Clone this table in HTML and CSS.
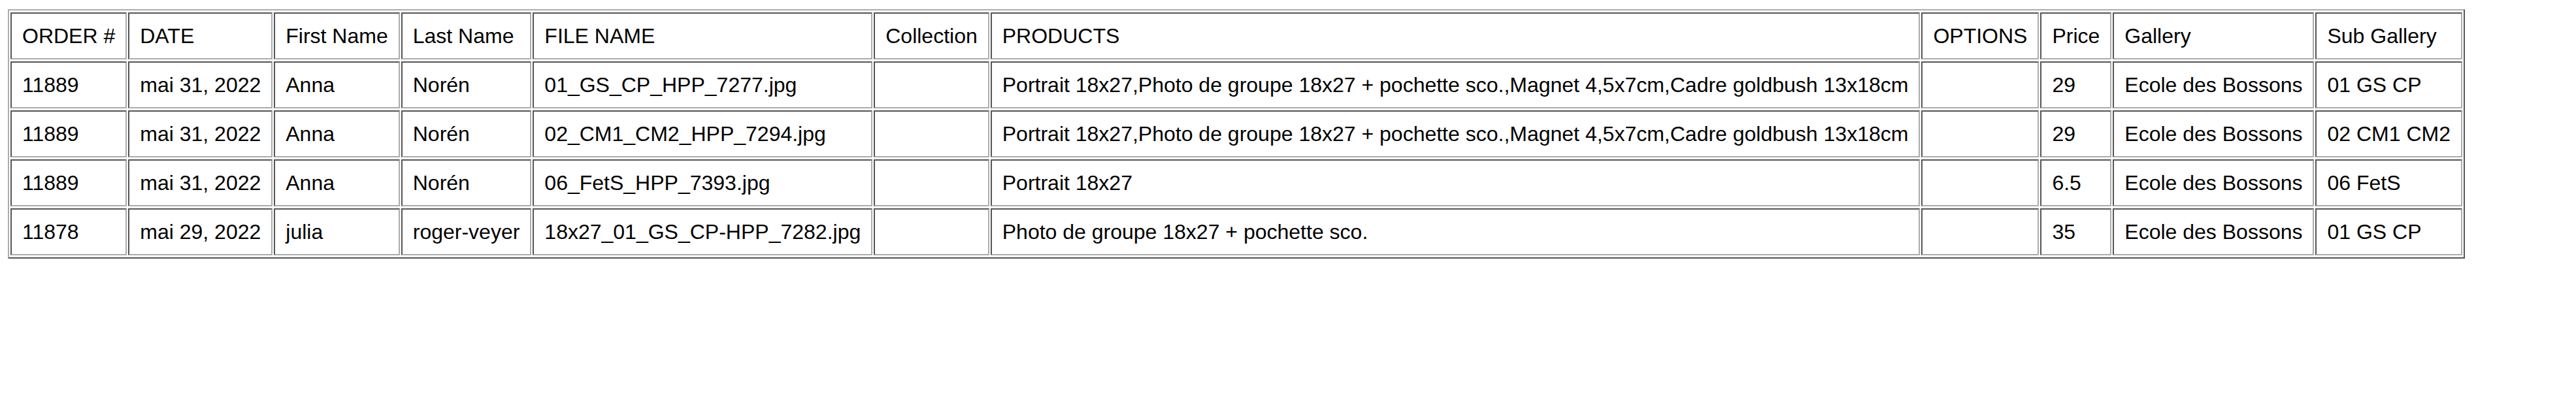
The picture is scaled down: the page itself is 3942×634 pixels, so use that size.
FILE: index.html
```html
<!DOCTYPE html>
<html lang="fr">
<head>
<meta charset="utf-8">
<title>Orders</title>
<link rel="stylesheet" href="styles.css">
</head>
<body>
<table class="orders">
  <tr>
    <td>ORDER #</td><td>DATE</td><td>First Name</td><td>Last Name</td><td>FILE NAME</td><td>Collection</td><td>PRODUCTS</td><td>OPTIONS</td><td>Price</td><td>Gallery</td><td>Sub Gallery</td>
  </tr>
  <tr>
    <td>11889</td><td>mai 31, 2022</td><td>Anna</td><td>Norén</td><td>01_GS_CP_HPP_7277.jpg</td><td></td><td>Portrait 18x27,Photo de groupe 18x27 + pochette sco.,Magnet 4,5x7cm,Cadre goldbush 13x18cm</td><td></td><td>29</td><td>Ecole des Bossons</td><td>01 GS CP</td>
  </tr>
  <tr>
    <td>11889</td><td>mai 31, 2022</td><td>Anna</td><td>Norén</td><td>02_CM1_CM2_HPP_7294.jpg</td><td></td><td>Portrait 18x27,Photo de groupe 18x27 + pochette sco.,Magnet 4,5x7cm,Cadre goldbush 13x18cm</td><td></td><td>29</td><td>Ecole des Bossons</td><td>02 CM1 CM2</td>
  </tr>
  <tr>
    <td>11889</td><td>mai 31, 2022</td><td>Anna</td><td>Norén</td><td>06_FetS_HPP_7393.jpg</td><td></td><td>Portrait 18x27</td><td></td><td>6.5</td><td>Ecole des Bossons</td><td>06 FetS</td>
  </tr>
  <tr>
    <td>11878</td><td>mai 29, 2022</td><td>julia</td><td>roger-veyer</td><td>18x27_01_GS_CP-HPP_7282.jpg</td><td></td><td>Photo de groupe 18x27 + pochette sco.</td><td></td><td>35</td><td>Ecole des Bossons</td><td>01 GS CP</td>
  </tr>
</table>
</body>
</html>
```
FILE: styles.css
```css
html, body {
  background: #fff;
}
body {
  margin: 0;
  padding: 14px 0 0 12px;
  font-family: "Liberation Sans", Arial, sans-serif;
  font-size: 32px;
  color: #000;
}
.orders {
  border-collapse: separate;
  border-spacing: 2px 3px;
  border-width: 2px;
  border-style: solid;
  border-color: #acacac #555 #555 #acacac;
}
.orders td {
  border-width: 2px;
  border-style: solid;
  border-color: #555 #acacac #acacac #555;
  padding: 16px;
  line-height: 36px;
  white-space: nowrap;
  vertical-align: middle;
  text-align: left;
}
```
